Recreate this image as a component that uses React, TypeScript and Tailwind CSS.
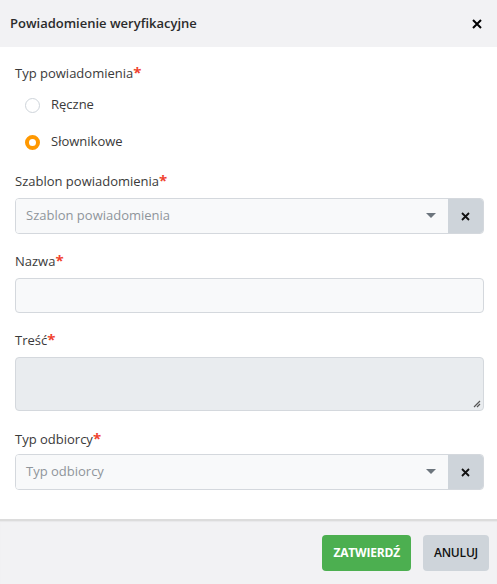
import React from "react";

function Label({ children }: { children: React.ReactNode }) {
  return (
    <div className="text-[13px] leading-[18px] text-[#3a3a3a] flex items-start">
      {children}
      <span className="text-[#f0432f] text-[15px] leading-[16px] font-bold">*</span>
    </div>
  );
}

function Select({ placeholder, top }: { placeholder: string; top: string }) {
  return (
    <div className={`flex h-[36px] ${top} rounded-[4px] border border-[#d4d8dd] overflow-hidden`}>
      <div className="flex-1 bg-[#f8f9fa] flex items-center pl-[10px] pr-[12px] text-[13px] text-[#8f959b]">
        <span className="flex-1">{placeholder}</span>
        <svg width="10" height="6" viewBox="0 0 10 6"><path d="M0 0h10L5 5z" fill="#6c757d" /></svg>
      </div>
      <div className="w-[35px] bg-[#ced4da] flex items-center justify-center">
        <svg width="9" height="9" viewBox="0 0 9 9"><path d="M1 1l7 7M8 1L1 8" stroke="#111" strokeWidth="1.8" /></svg>
      </div>
    </div>
  );
}

export default function App() {
  return (
    <div className="w-[497px] h-[584px] bg-white flex flex-col" style={{ fontFamily: '"Open Sans", "Noto Sans", sans-serif' }}>
      <div className="h-[47px] bg-[#f2f2f4] flex items-center justify-between pl-[10px] pr-[15px]">
        <span className="text-[13px] font-semibold text-[#2b2b2b]">Powiadomienie weryfikacyjne</span>
        <svg width="10" height="10" viewBox="0 0 10 10"><path d="M1 1l8 8M9 1L1 9" stroke="#000" strokeWidth="2" /></svg>
      </div>
      <div className="flex-1 pl-[15px] pr-[13px] pt-[17px]">
        <Label>Typ powiadomienia</Label>
        <div className="pl-[10px] mt-[15px] flex flex-col gap-[21px]">
          <div className="flex items-center gap-[11px] h-[16px]">
            <span className="w-[15px] h-[15px] rounded-full border border-[#ced4da] bg-white" />
            <span className="text-[13px] text-[#3a3a3a]">Ręczne</span>
          </div>
          <div className="flex items-center gap-[11px] h-[16px]">
            <span className="w-[15px] h-[15px] rounded-full border-[4px] border-[#ff9800] bg-white" />
            <span className="text-[13px] text-[#3a3a3a]">Słownikowe</span>
          </div>
        </div>
        <div className="mt-[22px]">
          <Label>Szablon powiadomienia</Label>
          <Select placeholder="Szablon powiadomienia" top="mt-[8px]" />
        </div>
        <div className="mt-[18px]">
          <Label>Nazwa</Label>
          <div className="h-[35px] mt-[8px] rounded-[4px] border border-[#d4d8dd] bg-[#f8f9fa]" />
        </div>
        <div className="mt-[18px]">
          <Label>Treść</Label>
          <div className="relative h-[54px] mt-[8px] rounded-[4px] border border-[#d4d8dd] bg-[#e9ecef]">
            <svg className="absolute right-[2px] bottom-[2px]" width="8" height="8" viewBox="0 0 8 8">
              <path d="M7 1L1 7M7 4L4 7" stroke="#555" strokeWidth="1.2" />
            </svg>
          </div>
        </div>
        <div className="mt-[19px]">
          <Label>Typ odbiorcy</Label>
          <Select placeholder="Typ odbiorcy" top="mt-[6px]" />
        </div>
      </div>
      <div className="h-[65px] bg-[#f2f2f4] border-t-[2px] border-[#dcdcdc] flex items-center justify-end gap-[12px] pr-[8px] shadow-[inset_0_1px_1px_rgba(0,0,0,0.04)]">
        <button className="h-[36px] px-[11px] rounded-[4px] bg-[#4caf50] text-white text-[12px] font-bold tracking-[-0.2px]">ZATWIERDŹ</button>
        <button className="h-[36px] px-[11px] rounded-[4px] bg-[#ced4da] text-[#111] text-[12px] font-semibold tracking-[-0.2px]">ANULUJ</button>
      </div>
    </div>
  );
}
